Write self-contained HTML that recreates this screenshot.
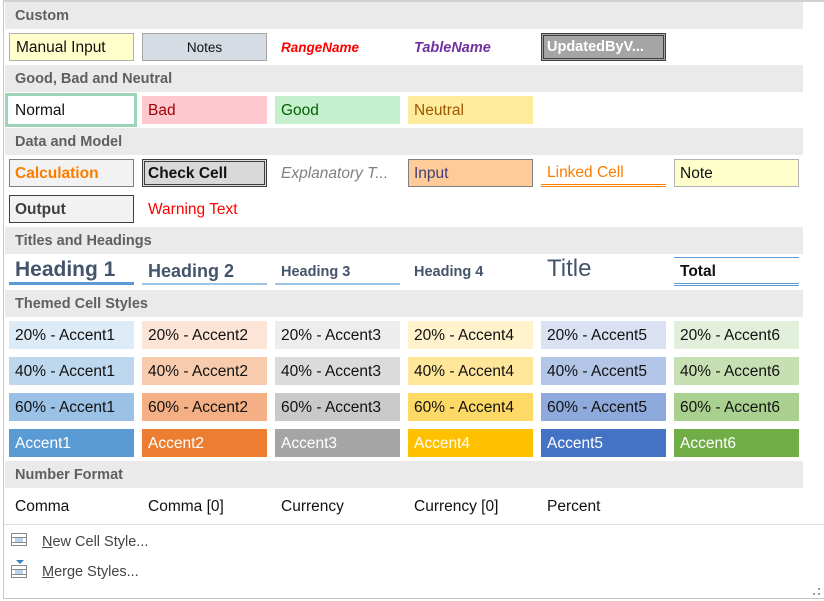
<!DOCTYPE html>
<html><head><meta charset="utf-8"><style>
*{margin:0;padding:0;box-sizing:border-box}
body{width:824px;height:601px;background:#fff;position:relative;overflow:hidden;font-family:"Liberation Sans",sans-serif}
.panel{position:absolute;left:3px;top:0;width:821px;height:599px;border-left:1px solid #c6c6c6;border-top:2px solid #d0d0d0;border-bottom:1px solid #c6c6c6}
.h{position:absolute;left:5px;width:798px;height:27px;background:#eaeaea;color:#5f5f5f;font-weight:bold;font-size:14.5px;line-height:28px;padding-left:10px}
.c{position:absolute;width:125px;height:28px;font-size:15.5px;line-height:30px;padding-left:6px;white-space:nowrap;overflow:hidden;color:#111}
.mi{position:absolute;left:42px;font-size:14.5px;color:#444}
.ic{position:absolute;left:11px;width:16px;height:13px;border:1px solid #8a8a8a;background:linear-gradient(#8a8a8a,#8a8a8a) 0 3px/100% 1px no-repeat,linear-gradient(#8a8a8a,#8a8a8a) 0 8px/100% 1px no-repeat,#fff}
.ic::after{content:"";position:absolute;left:3px;top:4px;width:8px;height:4px;background:#b9d3ee}
</style></head><body>
<div class="panel"></div>
<div class="h" style="top:2px">Custom</div>
<div class="c" style="left:9px;top:33px;background:#ffffcc;border:1px solid #b0b0b0;line-height:28px">Manual Input</div>
<div class="c" style="left:142px;top:33px;background:#d6dce4;border:1px solid #a6a6a6;text-align:center;font-size:13.5px;padding-left:0;line-height:28px">Notes</div>
<div class="c" style="left:275px;top:33px;color:#ff0000;font-style:italic;font-weight:bold;font-size:13.5px">RangeName</div>
<div class="c" style="left:408px;top:33px;color:#7030a0;font-style:italic;font-weight:bold;font-size:14.5px">TableName</div>
<div class="c" style="left:541px;top:33px;background:#a5a5a5;border:3px double #3f3f3f;color:#fff;font-weight:bold;font-size:14.5px;line-height:23px;padding-left:3px">UpdatedByV...</div>

<div class="h" style="top:65px">Good, Bad and Neutral</div>
<div class="c" style="left:5px;top:93px;width:132px;height:34px;border:3px solid #9fd5b7;line-height:30px;padding-left:7px">Normal</div>
<div class="c" style="left:142px;top:96px;background:#ffc7ce;color:#9c0006">Bad</div>
<div class="c" style="left:275px;top:96px;background:#c6efce;color:#006100">Good</div>
<div class="c" style="left:408px;top:96px;background:#ffeb9c;color:#9c5700">Neutral</div>

<div class="h" style="top:128px">Data and Model</div>
<div class="c" style="left:9px;top:159px;background:#f2f2f2;border:1px solid #7f7f7f;color:#fa7d00;font-weight:bold;line-height:28px;padding-left:5px">Calculation</div>
<div class="c" style="left:142px;top:159px;background:#d9d9d9;border:3px double #3f3f3f;font-weight:bold;line-height:24px;padding-left:3px">Check Cell</div>
<div class="c" style="left:275px;top:159px;color:#7f7f7f;font-style:italic">Explanatory T...</div>
<div class="c" style="left:408px;top:159px;background:#ffcc99;border:1px solid #7f7f7f;color:#3f3f76;line-height:28px;padding-left:5px">Input</div>
<div class="c" style="left:541px;top:159px;border-bottom:3px double #ff8001;color:#fa7d00;line-height:28px">Linked Cell</div>
<div class="c" style="left:674px;top:159px;background:#ffffcc;border:1px solid #b2b2b2;line-height:28px;padding-left:5px">Note</div>
<div class="c" style="left:9px;top:195px;background:#f2f2f2;border:1px solid #3f3f3f;color:#3f3f3f;font-weight:bold;line-height:28px;padding-left:5px">Output</div>
<div class="c" style="left:142px;top:195px;color:#ff0000">Warning Text</div>

<div class="h" style="top:227px">Titles and Headings</div>
<div class="c" style="left:9px;top:254px;height:31px;border-bottom:3px solid #5b9bd5;color:#44546a;font-weight:bold;font-size:21px;line-height:32px">Heading 1</div>
<div class="c" style="left:142px;top:254px;height:31px;border-bottom:2px solid #9dc3e6;color:#44546a;font-weight:bold;font-size:18px;line-height:34px">Heading 2</div>
<div class="c" style="left:275px;top:254px;height:31px;border-bottom:2px solid #9dc3e6;color:#44546a;font-weight:bold;font-size:14.5px;line-height:37px">Heading 3</div>
<div class="c" style="left:408px;top:254px;height:31px;color:#44546a;font-weight:bold;font-size:14.5px;line-height:37px">Heading 4</div>
<div class="c" style="left:541px;top:254px;height:31px;color:#44546a;font-size:24px;line-height:30px">Title</div>
<div class="c" style="left:674px;top:257px;height:29px;border-top:1px solid #5b9bd5;border-bottom:3px double #5b9bd5;font-weight:bold;line-height:28px">Total</div>

<div class="h" style="top:290px">Themed Cell Styles</div>
<div class="c" style="left:9px;top:321px;background:#ddebf7">20% - Accent1</div>
<div class="c" style="left:142px;top:321px;background:#fce4d6">20% - Accent2</div>
<div class="c" style="left:275px;top:321px;background:#ededed">20% - Accent3</div>
<div class="c" style="left:408px;top:321px;background:#fff2cc">20% - Accent4</div>
<div class="c" style="left:541px;top:321px;background:#d9e1f2">20% - Accent5</div>
<div class="c" style="left:674px;top:321px;background:#e2efda">20% - Accent6</div>
<div class="c" style="left:9px;top:357px;background:#bdd7ee">40% - Accent1</div>
<div class="c" style="left:142px;top:357px;background:#f8cbad">40% - Accent2</div>
<div class="c" style="left:275px;top:357px;background:#dbdbdb">40% - Accent3</div>
<div class="c" style="left:408px;top:357px;background:#ffe699">40% - Accent4</div>
<div class="c" style="left:541px;top:357px;background:#b4c6e7">40% - Accent5</div>
<div class="c" style="left:674px;top:357px;background:#c6e0b4">40% - Accent6</div>
<div class="c" style="left:9px;top:393px;background:#9bc2e6">60% - Accent1</div>
<div class="c" style="left:142px;top:393px;background:#f4b084">60% - Accent2</div>
<div class="c" style="left:275px;top:393px;background:#c9c9c9">60% - Accent3</div>
<div class="c" style="left:408px;top:393px;background:#ffd966">60% - Accent4</div>
<div class="c" style="left:541px;top:393px;background:#8ea9db">60% - Accent5</div>
<div class="c" style="left:674px;top:393px;background:#a9d08e">60% - Accent6</div>
<div class="c" style="left:9px;top:429px;background:#5b9bd5;color:#fff">Accent1</div>
<div class="c" style="left:142px;top:429px;background:#ed7d31;color:#fff">Accent2</div>
<div class="c" style="left:275px;top:429px;background:#a5a5a5;color:#fff">Accent3</div>
<div class="c" style="left:408px;top:429px;background:#ffc000;color:#fff">Accent4</div>
<div class="c" style="left:541px;top:429px;background:#4472c4;color:#fff">Accent5</div>
<div class="c" style="left:674px;top:429px;background:#70ad47;color:#fff">Accent6</div>

<div class="h" style="top:461px">Number Format</div>
<div class="c" style="left:9px;top:492px">Comma</div>
<div class="c" style="left:142px;top:492px">Comma [0]</div>
<div class="c" style="left:275px;top:492px">Currency</div>
<div class="c" style="left:408px;top:492px">Currency [0]</div>
<div class="c" style="left:541px;top:492px">Percent</div>

<div style="position:absolute;left:4px;top:524px;width:820px;height:1px;background:#e0e0e0"></div>
<div class="ic" style="top:533px"></div>
<div class="mi" style="top:534px"><u>N</u>ew Cell Style...</div>
<div style="position:absolute;left:16px;top:560px;width:0;height:0;border-left:4px solid transparent;border-right:4px solid transparent;border-top:4px solid #3b7ec4"></div>
<div class="ic" style="top:565px"></div>
<div class="mi" style="top:564px"><u>M</u>erge Styles...</div>
<div style="position:absolute;left:818px;top:588px;width:2px;height:2px;background:#999"></div>
<div style="position:absolute;left:813px;top:593px;width:2px;height:2px;background:#999"></div>
<div style="position:absolute;left:818px;top:593px;width:2px;height:2px;background:#999"></div>
</body></html>
